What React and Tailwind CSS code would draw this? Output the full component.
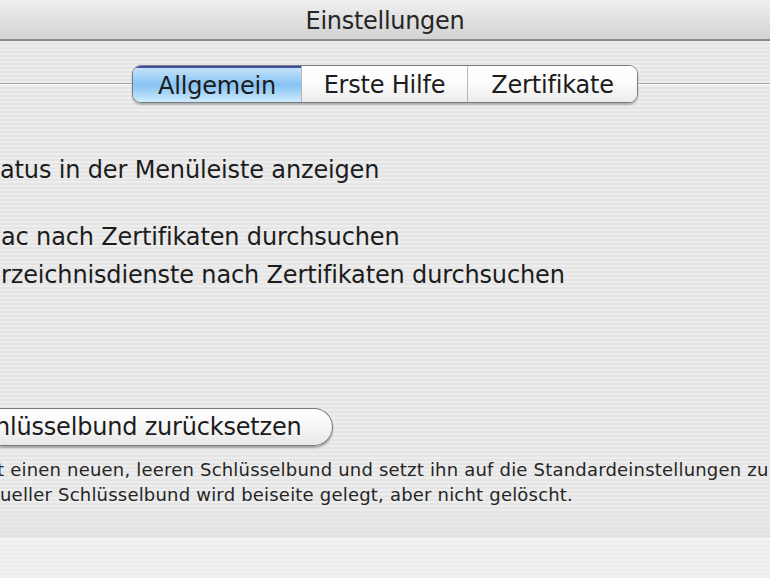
import React from 'react'

const stripes =
  'bg-[repeating-linear-gradient(180deg,#ededed_0px,#ededed_2px,#e5e5e5_2px,#e5e5e5_4px)]'

const segBase = 'flex h-full items-center justify-center pt-[1px]'
const segPlain = 'bg-gradient-to-b from-white via-[#fbfbfb] to-[#ebebeb] border-l border-l-[#b8b8b8]'

export default function App() {
  return (
    <div className="flex h-[578px] w-[770px] flex-col overflow-hidden font-['DejaVu_Sans',sans-serif] text-[#1c1c1c]">
      {/* title bar */}
      <div className="flex h-[41px] shrink-0 items-center justify-center border-b-2 border-b-[#8c8c8c] bg-gradient-to-b from-[#f0f0f0] to-[#d2d2d2] pt-[2px]">
        <span className="text-[24px] tracking-[-0.3px] text-[#262626]">Einstellungen</span>
      </div>

      {/* body */}
      <div className={'flex flex-1 flex-col ' + stripes}>
        <div className="mt-[24px] flex h-[38px] items-center">
          <div className="h-[2px] flex-1 border-b border-b-white bg-[#a4a4a4]" />
          <div className="flex h-[38px] w-[506px] overflow-hidden rounded-[9px] border border-[#7c7c7c] text-[24px] tracking-[-0.2px] shadow-[0_2px_2px_rgba(0,0,0,0.25)]">
            <div className={segBase + ' w-[168px] border-t-2 border-t-[#3d4fa3] bg-gradient-to-b from-[#c4e2fb] via-[#86c3f3] to-[#cdebfe]'}>
              Allgemein
            </div>
            <div className={segBase + ' w-[166px] ' + segPlain}>Erste Hilfe</div>
            <div className={segBase + ' flex-1 ' + segPlain}>Zertifikate</div>
          </div>
          <div className="h-[2px] flex-1 border-b border-b-white bg-[#a4a4a4]" />
        </div>

        <div className="mt-[53px] whitespace-nowrap text-[24px] leading-[28px] tracking-[-0.15px]">
          atus in der Menüleiste anzeigen
        </div>

        <div className="mt-[39px] whitespace-nowrap text-[24px] leading-[28px] tracking-[-0.15px]">
          <div className="ml-[1px]">ac nach Zertifikaten durchsuchen</div>
          <div className="ml-[1px] mt-[10px]">rzeichnisdienste nach Zertifikaten durchsuchen</div>
        </div>

        <div className="mt-[119px] flex h-[38px] w-[333px] items-center rounded-r-[19px] border border-l-0 border-[#7a7a7a] bg-gradient-to-b from-white via-[#f7f7f7] to-[#e6e6e6] shadow-[0_2px_2px_rgba(0,0,0,0.3)]">
          <span className="-ml-[5px] whitespace-nowrap text-[24px] tracking-[-0.2px]">
            hlüsselbund zurücksetzen
          </span>
        </div>

        <div className="mt-[11px] whitespace-nowrap text-[18px] leading-[25px] tracking-[0.2px] text-[#262626]">
          <div className="-ml-[3px]">
            t einen neuen, leeren Schlüsselbund und setzt ihn auf die Standardeinstellungen zu
          </div>
          <div>ueller Schlüsselbund wird beiseite gelegt, aber nicht gelöscht.</div>
        </div>

        <div className="flex-1 bg-gradient-to-b from-transparent to-[#dedede]/60" />
      </div>

      {/* bottom strip */}
      <div className="h-[40px] shrink-0 border-t border-t-[#f8f8f8] bg-[repeating-linear-gradient(180deg,#f3f3f3_0px,#f3f3f3_2px,#ececec_2px,#ececec_4px)]" />
    </div>
  )
}
